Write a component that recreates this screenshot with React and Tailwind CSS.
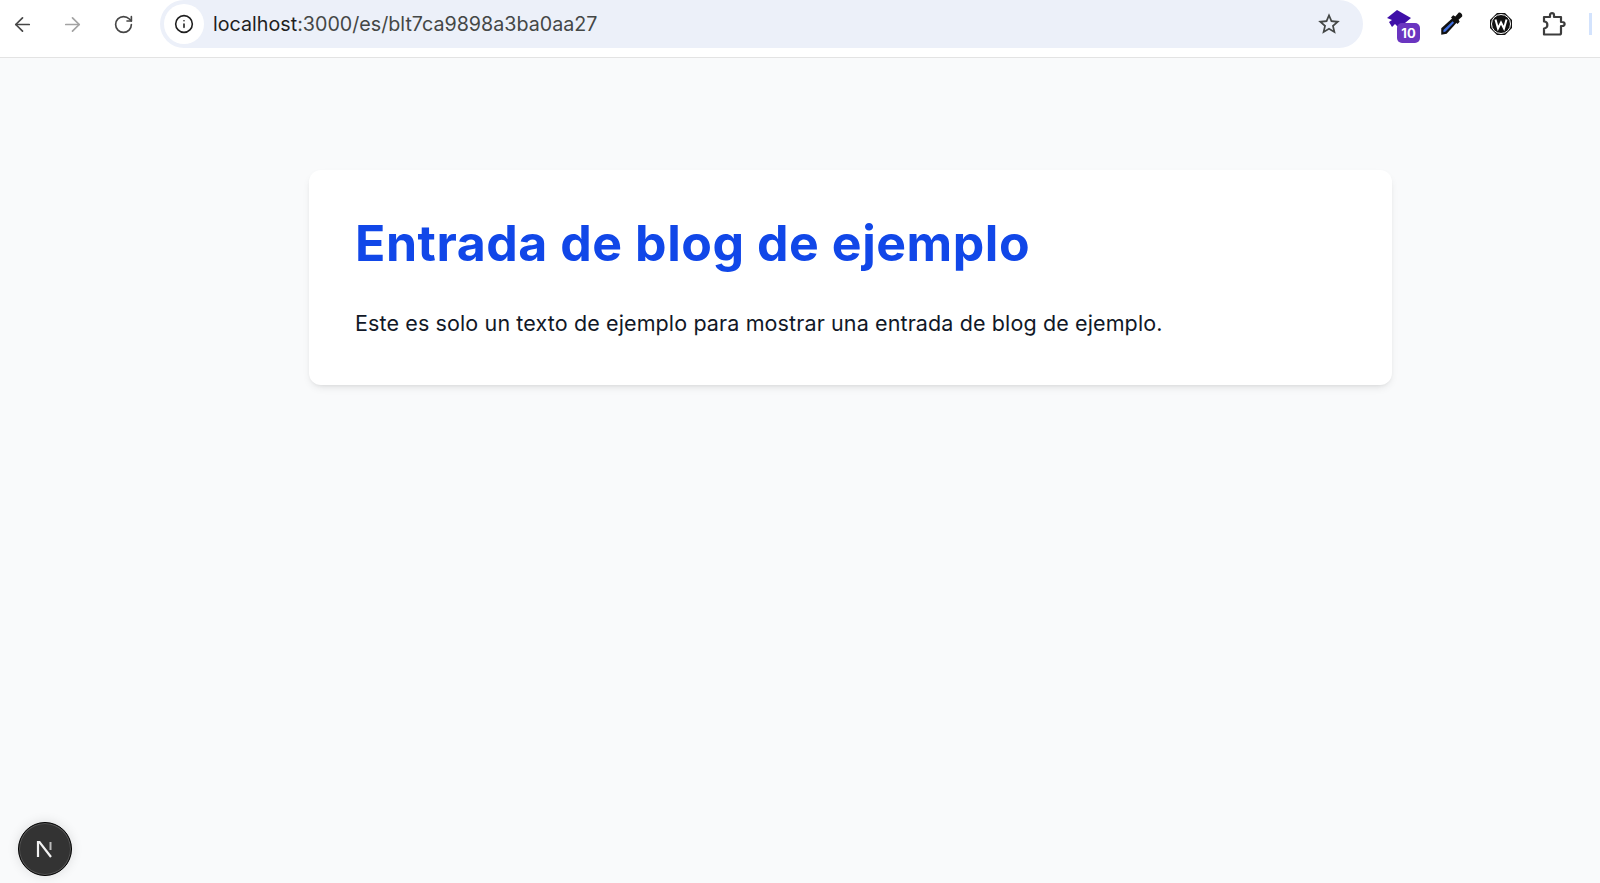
import React from "react";
import { ArrowLeft, ArrowRight, RotateCw, Info } from "lucide-react";

export default function App() {
  return (
    <div className="relative flex h-[883px] w-[1600px] flex-col overflow-hidden bg-[#f9fafb] font-['Inter',sans-serif]">
      <header className="flex h-[58px] items-start border-b border-[#e3e3e3] bg-white">
        <div className="flex h-[48px] w-[160px] items-center text-[#474747]">
          <ArrowLeft size={23} strokeWidth={1.8} className="ml-[11px]" />
          <ArrowRight size={23} strokeWidth={1.8} className="ml-[27px] text-[#a3a3a3]" />
          <RotateCw size={21} strokeWidth={1.9} className="ml-[29px]" />
        </div>
        <div className="flex h-[48px] w-[1203px] items-center rounded-[24px] bg-[#ecf0f9] pl-[4px] pr-[12px]">
          <div className="flex h-[40px] w-[40px] items-center justify-center rounded-full bg-white">
            <Info size={20} strokeWidth={1.9} className="text-[#1f1f1f]" />
          </div>
          <span className="ml-[9px] pt-[2px] text-[19.7px] leading-none text-[#444746]">
            <span className="text-[#1f1f1f]">localhost</span>:3000/es/blt7ca9898a3ba0aa27
          </span>
          <svg width="26" height="26" viewBox="0 0 24 24" className="ml-auto mr-[9px] text-[#444746]" fill="currentColor">
            <path d="M22 9.24l-7.19-.62L12 2 9.19 8.63 2 9.24l5.46 4.73L5.82 21 12 17.27 18.18 21l-1.63-7.03L22 9.24zM12 15.4l-3.76 2.27 1-4.28-3.32-2.88 4.38-.38L12 6.1l1.71 4.04 4.38.38-3.32 2.88 1 4.28L12 15.4z" />
          </svg>
        </div>
        <div className="flex h-[48px] flex-1 items-center">
          <div className="relative ml-[24px] h-[34px] w-[33px]">
            <svg width="26" height="24" viewBox="0 0 26 24" className="absolute left-0 top-[3px]">
              <path d="M0 8 L10 0 L24 8 L12 18 L8 14 L5 17 L2 12 L5 10 Z" fill="#3f0fa8" />
            </svg>
            <span className="absolute bottom-[-2px] right-0 flex h-[20px] w-[23px] items-center justify-center rounded-[5px] bg-[#6a35c0] text-[13px] font-bold leading-none text-white">10</span>
          </div>
          <svg width="26" height="26" viewBox="0 0 24 24" className="ml-[18px]">
            <path d="M14 6 L18 10 L8 21 L3 22 L3 16 Z" fill="#111" />
            <path d="M13.5 9.5 L14.8 10.8 L7 19 L5 19.5 L5 17.5 Z" fill="#3f6fe0" />
            <path d="M12 6 L14 4 L16 5 L19 1.5 C20.5 .8 23 3 22.3 5 L19 8 L20 10 L18 12 Z" fill="#111" />
          </svg>
          <svg width="24" height="24" viewBox="0 0 24 24" className="ml-[25px]">
            <path d="M8 1 H16 L23 8 V16 L16 23 H8 L1 16 V8 Z" fill="#111" />
            <circle cx="12" cy="12" r="9.5" fill="none" stroke="#fff" strokeWidth="1" />
            <circle cx="12" cy="12" r="8" fill="#111" />
            <path d="M6.5 7.5 L9 16.5 L12 10.5 L15 16.5 L17.5 7.5" fill="none" stroke="#fff" strokeWidth="2" />
          </svg>
          <svg width="26" height="26" viewBox="0 0 26 26" className="ml-[28px] text-[#3c3c3c]">
            <path d="M3 6 H9 V4 C9 1.5 13 1.5 13 4 V6 H20 V11 H21 C24.5 11 24.5 15 21 15 H20 V22 C20 23 19.5 23.5 18.5 23.5 H3 V17.5 C7.5 17.5 7.5 10.5 3 10.5 Z" fill="none" stroke="currentColor" strokeWidth="2.2" strokeLinejoin="round" />
          </svg>
          <div className="ml-[22px] h-[22px] w-[3px] bg-[#d3e3fd]" />
        </div>
      </header>

      <main className="flex-1 pl-[309px] pt-[112px]">
        <article className="h-[215px] w-[1083px] rounded-[12px] bg-white px-[46px] pt-[45px] shadow-[0_4px_8px_-2px_rgba(0,0,0,0.1),0_2px_4px_-2px_rgba(0,0,0,0.08)]">
          <h1 className="text-[50px] font-bold leading-[56px] tracking-[0.55px] text-[#1147e8]">Entrada de blog de ejemplo</h1>
          <p className="mt-[36px] text-[21.5px] leading-[32px] tracking-[0.12px] text-[#111827]">Este es solo un texto de ejemplo para mostrar una entrada de blog de ejemplo.</p>
        </article>
      </main>

      <div className="absolute bottom-[7px] left-[18px] flex h-[54px] w-[54px] items-center justify-center rounded-full border border-black bg-[#333333] shadow-[0_0_12px_rgba(0,0,0,0.12)] ring-1 ring-inset ring-[#555]">
        <svg width="20" height="20" viewBox="0 0 20 20">
          <path d="M3 18 V3 H4.5 L16 18" fill="none" stroke="#f2f2f2" strokeWidth="2.2" />
          <path d="M15.5 3 V11" stroke="#bbb" strokeWidth="2" />
        </svg>
      </div>
    </div>
  );
}
